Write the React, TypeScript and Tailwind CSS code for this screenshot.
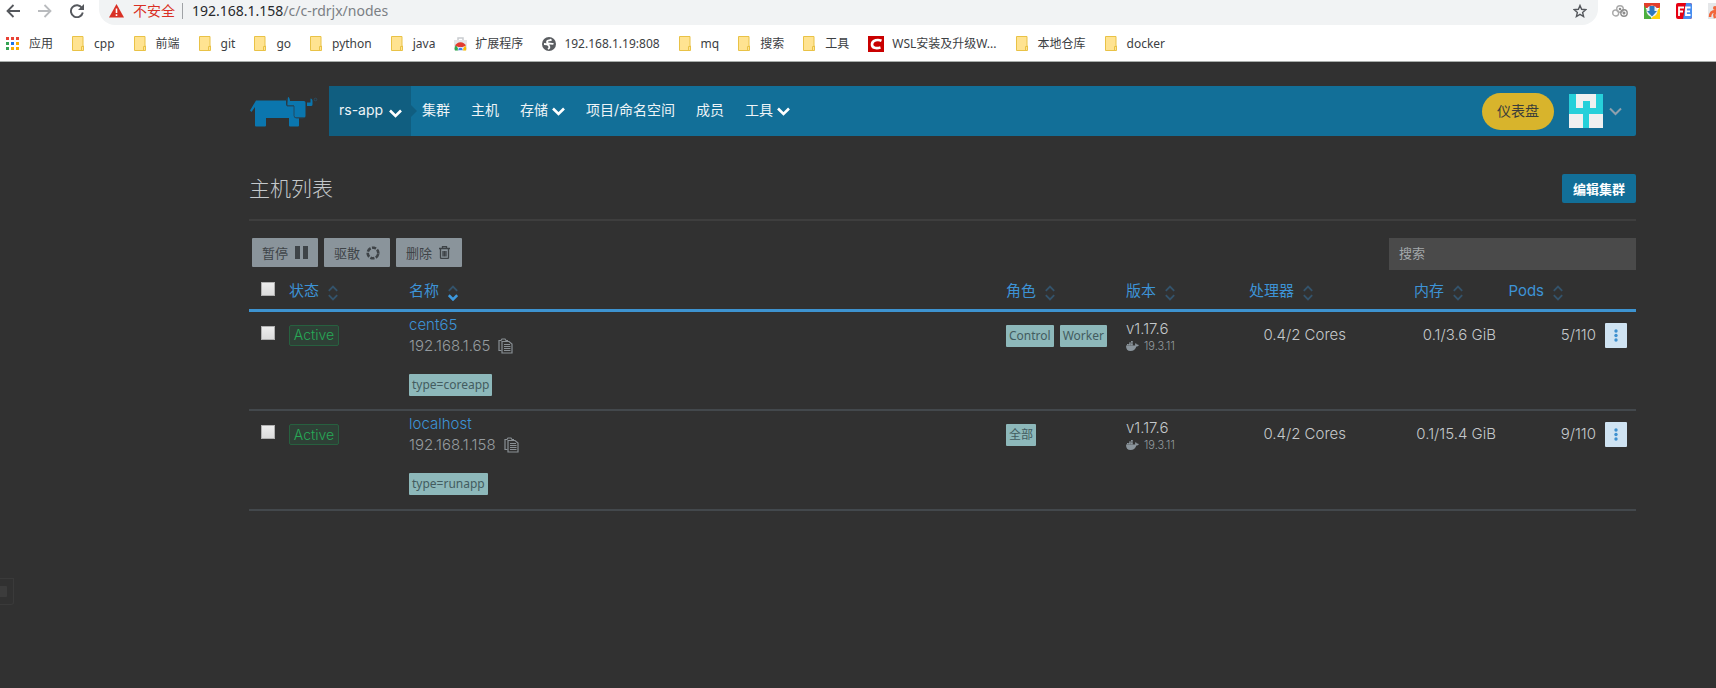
import type { ReactNode } from "react";

const bookmarks: { label: string; icon: "apps" | "folder" | "store" | "globe" | "csdn" }[] = [
  { label: "应用", icon: "apps" },
  { label: "cpp", icon: "folder" },
  { label: "前端", icon: "folder" },
  { label: "git", icon: "folder" },
  { label: "go", icon: "folder" },
  { label: "python", icon: "folder" },
  { label: "java", icon: "folder" },
  { label: "扩展程序", icon: "store" },
  { label: "192.168.1.19:808", icon: "globe" },
  { label: "mq", icon: "folder" },
  { label: "搜索", icon: "folder" },
  { label: "工具", icon: "folder" },
  { label: "WSL安装及升级W...", icon: "csdn" },
  { label: "本地仓库", icon: "folder" },
  { label: "docker", icon: "folder" },
];

const nodes = [
  { name: "cent65", ip: "192.168.1.65", tag: "type=coreapp", roles: ["Control", "Worker"], version: "v1.17.6", docker: "19.3.11", cpu: "0.4/2 Cores", memory: "0.1/3.6 GiB", pods: "5/110" },
  { name: "localhost", ip: "192.168.1.158", tag: "type=runapp", roles: ["全部"], version: "v1.17.6", docker: "19.3.11", cpu: "0.4/2 Cores", memory: "0.1/15.4 GiB", pods: "9/110" },
];

function FolderIcon() {
  return (
    <svg width="12" height="15" viewBox="0 0 12 15">
      <path d="M.5.5h10.5v9.500h.5v4.500H.5z" fill="#ffe391" stroke="#e9c246" />
      <path d="M9.500 14v-3.500h2" fill="none" stroke="#e9c246" />
    </svg>
  );
}

function AppsIcon() {
  const colors = ["#e94235", "#e94235", "#e94235", "#34a353", "#1a73e8", "#f9ab00", "#34a353", "#f9ab00", "#f9ab00"];
  return (
    <svg width="13" height="13" viewBox="0 0 13 13">
      {colors.map((c, i) => (
        <rect key={i} x={(i % 3) * 5} y={Math.floor(i / 3) * 5} width="3" height="3" fill={c} />
      ))}
    </svg>
  );
}

function StoreIcon() {
  return (
    <svg width="13" height="14" viewBox="0 0 13 14">
      <path d="M4 4V1h5v3" fill="none" stroke="#c9ccd0" strokeWidth="1.500" />
      <path d="M0 3h13v9a1.500 1.500 0 0 1-1.500 1.500h-10A1.500 1.500 0 0 1 0 12z" fill="#e4e6e8" />
      <path d="M1 13.500A5.500 5.500 0 0 1 2 8l3 5.500z" fill="#2da94f" />
      <path d="M1.200 8.800a5.700 5.700 0 0 1 10.600 0L8.500 10h-4z" fill="#e33b2e" />
      <path d="M11.300 8.500a6 6 0 0 1 .7 5H8z" fill="#fdbd00" />
      <path d="M4.200 13.500a2.400 2.400 0 1 1 4.600 0z" fill="#3e82f1" stroke="#fff" strokeWidth=".6" />
    </svg>
  );
}

function GlobeIcon() {
  return (
    <svg width="14" height="14" viewBox="0 0 14 14">
      <circle cx="7" cy="7" r="7" fill="#5a5d61" />
      <path d="M9.500 2.500C8 4 5 2.500 5 5s4 1 6.500 2M2 7c2 0 4.500.5 5 2s1.500 1.500-1 3" fill="none" stroke="#fff" strokeWidth="1.800" />
    </svg>
  );
}

function CsdnIcon() {
  return (
    <svg width="16" height="16" viewBox="0 0 16 16">
      <rect width="16" height="16" fill="#c90000" />
      <path d="M13.500 4.800C10 3.300 4.500 4 4 8c-.4 4.200 4.500 4.700 8.500 3.500" fill="none" stroke="#fff" strokeWidth="2.600" />
    </svg>
  );
}

const bookmarkIcons = { apps: <AppsIcon />, folder: <FolderIcon />, store: <StoreIcon />, globe: <GlobeIcon />, csdn: <CsdnIcon /> };

function BrowserChrome() {
  return (
    <header className="overflow-hidden border-b border-[#a9aeab] bg-white font-['Noto_Sans','Noto_Sans_CJK_SC',sans-serif]">
      <div className="flex h-[25px] items-start">
        <div className="flex h-[22px] shrink-0 items-center gap-[18px] pr-[15px] pl-[6px]">
          <button aria-label="后退">
            <svg width="14" height="14" viewBox="0 0 14 14" fill="none" stroke="#55585d" strokeWidth="1.800"><path d="M14 7H1.500M7.500 1 1.500 7l6 6" /></svg>
          </button>
          <button aria-label="前进">
            <svg width="14" height="14" viewBox="0 0 14 14" fill="none" stroke="#b9bbbe" strokeWidth="1.800"><path d="M0 7h12.500M6.500 1l6 6-6 6" /></svg>
          </button>
          <button aria-label="重新加载">
            <svg width="14" height="14" viewBox="0 0 14 14"><path d="M12 4A6 6 0 1 0 12.800 8.500" fill="none" stroke="#55585d" strokeWidth="1.900" /><path d="M14 0v6H8z" fill="#55585d" /></svg>
          </button>
        </div>
        <div className="flex h-[25px] min-w-0 flex-1 items-start rounded-b-[16px] bg-[#f1f3f4] pr-[11px] pl-[10px]">
          <div className="flex h-[22px] flex-1 items-center text-[14px] leading-[20px] whitespace-nowrap">
            <svg width="15" height="14" viewBox="0 0 15 14"><path d="M7.500 0 15 13.500H0z" fill="#d93025" /><path d="M7.500 4.500v4.500M7.500 10.200v1.800" stroke="#fff" strokeWidth="1.600" /></svg>
            <span className="ml-[9px] text-[#d93025]">不安全</span>
            <span className="mr-[9px] ml-[7px] h-[16px] w-px bg-[#a0a3a6]" />
            <span className="text-[#27292c]">192.168.1.158</span>
            <span className="text-[#7b7f84]">/c/c-rdrjx/nodes</span>
          </div>
          <button aria-label="收藏" className="flex h-[22px] items-center">
            <svg width="14" height="14" viewBox="0 0 14 14"><path d="m7 1.500 1.600 3.800 4.200.400-3.200 2.700 1 4.100L7 10.300l-3.600 2.200 1-4.100L1.200 5.700l4.200-.4z" fill="none" stroke="#55585d" strokeWidth="1.400" /></svg>
          </button>
        </div>
        <div className="flex h-[22px] w-[118px] shrink-0 items-center gap-[16px] overflow-hidden pl-[14px]">
          <svg className="shrink-0" width="16" height="16" viewBox="0 0 16 16" fill="none" stroke="#8d8d8d" strokeWidth="1.400">
            <circle cx="8" cy="6" r="3.300" stroke="#aaa" /><circle cx="3.700" cy="10" r="3" stroke="#aaa" /><circle cx="12" cy="10" r="3.200" /><circle cx="12" cy="10" r=".8" /><circle cx="8" cy="6" r=".6" />
          </svg>
          <svg className="shrink-0" width="16" height="16" viewBox="0 0 16 16">
            <rect width="16" height="16" fill="#fff" /><path d="M0 0h16v5H0z" fill="#e33e2b" /><path d="M0 2v14h8z" fill="#4caf3f" /><path d="M16 4v12H7z" fill="#fdd20a" /><circle cx="8" cy="8" r="5.500" fill="#e8eef5" /><path d="M5.500 3h5v5h2.500L8 13.500 3 8h2.500z" fill="#2d77bd" />
          </svg>
          <svg className="shrink-0" width="16" height="16" viewBox="0 0 16 16">
            <rect width="16" height="16" rx="2" fill="#e60012" /><path d="M10 0h4a2 2 0 0 1 2 2v12a2 2 0 0 1-2 2H7z" fill="#488ef0" /><path d="M3 13V4.500h5M3 8.500h4M14.500 4.500H10v7.500h4.500M10 8.300h4" fill="none" stroke="#fff" strokeWidth="1.800" />
          </svg>
          <svg className="shrink-0" width="16" height="16" viewBox="0 0 16 16"><rect width="16" height="16" fill="#e5e7e9" /><circle cx="7" cy="5" r="2" fill="#f2673c" /><path d="M2 14c0-4 2-6 6-6v2c-2 0-2 2-1 5" fill="none" stroke="#f2673c" strokeWidth="2.500" /></svg>
        </div>
      </div>
      <nav className="flex h-[36px] items-center gap-[19px] pt-[1px] pl-[6px] text-[12px] leading-[16px] whitespace-nowrap text-[#3c4043]">
        {bookmarks.map((b) => (
          <a key={b.label} href="#" className={b.icon === "folder" || b.icon === "apps" ? "flex items-center gap-[10px]" : "flex items-center gap-[8px]"}>
            {bookmarkIcons[b.icon]}
            <span>{b.label}</span>
          </a>
        ))}
      </nav>
    </header>
  );
}

function Chevron({ color = "#ffffff", thin = false }: { color?: string; thin?: boolean }) {
  return (
    <svg width="13" height="9" viewBox="0 0 13 9" fill="none" stroke={color} strokeWidth={thin ? 2 : 2.6}>
      <path d="m1 1.500 5.500 5.500L12 1.500" />
    </svg>
  );
}

function SortIcon({ active = false }: { active?: boolean }) {
  return (
    <svg width="10" height="16" viewBox="0 0 10 16" fill="none" stroke="#34536b" strokeWidth="1.800">
      <path d="m.8 5.800 4.200-4.200 4.200 4.200" />
      <path d="m.8 10.200 4.200 4.200 4.200-4.200" stroke={active ? "#3d98dc" : "#34536b"} strokeWidth={active ? 2.6 : 1.8} />
    </svg>
  );
}

function RancherLogo() {
  return (
    <svg width="68" height="31" viewBox="0 0 68 31">
      <path d="M6 3.500h30v3.500q0 2 2 2h6v9q0 3 3 3h2v7.500q0 1-1 1H40q-1 0-1-1V21H16v7.500q0 1-1 1H6q-1 0-1-1V10l-3.500 5L0 13.500z" fill="#0b76ae" />
      <path d="M38 0q1.500 0 2 4h14q1.500 0 1.500 1.500V19q0 1.500-1.500 1.500H45.500Q44 20.500 44 19V8.500h-6q-1 0-1-1.500z" fill="#0b76ae" />
      <path d="M57 5.500h3.500V1.500q2 0 2 3v3q0 1.500-1.500 1.500h-4z" fill="#0b76ae" />
      <path d="M37 1.500V9h7v9.500q0 2.500 2.500 2.500h7" fill="none" stroke="#25465a" strokeWidth=".9" />
      <circle cx="65.500" cy="2.500" r="1.300" fill="none" stroke="#285b78" strokeWidth=".6" />
    </svg>
  );
}

function NavBar() {
  return (
    <div className="flex h-[50px] items-stretch">
      <a href="#" aria-label="Rancher" className="flex w-[80px] shrink-0 items-start pt-[11px] pl-[1px]"><RancherLogo /></a>
      <nav className="flex flex-1 items-center rounded-[2px] bg-[#126f98] pr-[14px] text-[14px] leading-[20px] text-[#eef4f7]">
        <button className="flex h-full w-[82px] items-center justify-between bg-[#105e80] pr-[9px] pb-[2px] pl-[10px]">
          rs-app
          <span className="pt-[6px]"><Chevron /></span>
        </button>
        <svg width="6" height="12" viewBox="0 0 6 12"><path d="M0 0l6 6-6 6z" fill="#105e80" /></svg>
        <div className="flex flex-1 items-center gap-[21px] pb-[2px] pl-[5px] whitespace-nowrap">
          <a href="#">集群</a>
          <a href="#">主机</a>
          <button className="flex items-center gap-[4px]">存储<span className="pt-[2px]"><Chevron /></span></button>
          <a href="#">项目/命名空间</a>
          <a href="#">成员</a>
          <button className="flex items-center gap-[4px]">工具<span className="pt-[2px]"><Chevron /></span></button>
        </div>
        <button className="mr-[15px] h-[37px] rounded-full bg-[#d8b42c] px-[15px] text-[#3b3d3a]">仪表盘</button>
        <button aria-label="用户" className="flex items-center gap-[6px]">
          <svg width="34" height="34" viewBox="0 0 34 34">
            <rect width="34" height="34" fill="#27d0da" />
            <path d="M7 0h20v14h-6V7h-7v7H7zM0 20h14v14H0zM20 20h14v14H20z" fill="#f0f0f0" />
          </svg>
          <Chevron color="#8fa0ad" thin />
        </button>
      </nav>
    </div>
  );
}

function ActionButton({ children, icon }: { children: ReactNode; icon: ReactNode }) {
  return (
    <button className="flex h-[29px] w-[66px] items-center justify-between rounded-[1px] bg-[#8a949b] px-[10px] text-[13px] leading-[20px] text-[#3e4347]">
      {children}
      {icon}
    </button>
  );
}

function Check({ label }: { label: string }) {
  return <input type="checkbox" aria-label={label} className="block size-[14px] appearance-none border border-[#b0b0b0] bg-linear-to-b from-[#ededed] to-[#dcdcdc]" />;
}

function SortHeader({ label, active = false, right = false }: { label: string; active?: boolean; right?: boolean }) {
  return (
    <th className={right ? "pt-[4px] pr-[38px] font-normal" : "pt-[4px] pl-[5px] font-normal"}>
      <button className={right ? "ml-auto flex items-center gap-[9px] whitespace-nowrap" : "flex items-center gap-[9px] whitespace-nowrap"}>
        {label}
        <span className="pt-[3px]"><SortIcon active={active} /></span>
      </button>
    </th>
  );
}

function Badge({ children }: { children: ReactNode }) {
  return <span className="flex h-[22px] items-center rounded-[1px] bg-[#8db8ba] px-[3px] font-['Noto_Sans','Noto_Sans_CJK_SC',sans-serif] text-[12px] leading-[16px] font-normal text-[#435c60]">{children}</span>;
}

function NodeTable() {
  return (
    <table className="w-full table-fixed border-collapse text-left text-[15px] leading-[20px] font-light">
      <colgroup>
        <col className="w-[35px]" />
        <col className="w-[120px]" />
        <col />
        <col className="w-[120px]" />
        <col className="w-[120px]" />
        <col className="w-[110px]" />
        <col className="w-[150px]" />
        <col className="w-[100px]" />
        <col className="w-[35px]" />
      </colgroup>
      <thead className="text-[#3d93d6]">
        <tr className="h-[40px] border-b-3 border-[#3d93d0]">
          <th className="pb-[1px] pl-[12px]"><Check label="全选" /></th>
          <SortHeader label="状态" />
          <SortHeader label="名称" active />
          <SortHeader label="角色" />
          <SortHeader label="版本" />
          <SortHeader label="处理器" right />
          <SortHeader label="内存" right />
          <SortHeader label="Pods" right />
          <th />
        </tr>
      </thead>
      <tbody className="text-[#c4c8cb]">
        {nodes.map((n) => (
          <tr key={n.name} className="h-[100px] border-b-2 border-[#43484c] align-top">
            <td className="pt-[14px] pl-[12px]"><Check label={n.name} /></td>
            <td className="pt-[13px] pl-[5px]">
              <span className="inline-flex h-[21px] w-[50px] items-center justify-center rounded-[2px] border border-[#27603f] bg-[#2e4036] text-[14px] leading-[16px] text-[#27aa56]">Active</span>
            </td>
            <td className="pt-[3px] pl-[5px]">
              <a href="#" className="block text-[#3d93d6]">{n.name}</a>
              <div className="flex items-center gap-[8px] pt-[1px] text-[#959b9f]">
                {n.ip}
                <button aria-label="复制">
                  <svg width="15" height="16" viewBox="0 0 15 16" fill="none" stroke="#898f94" strokeWidth="1.200">
                    <path d="M3.500 12.500h-2.500v-10h2l1-1.500h3l1 1.500h2" /><path d="M4 3.500h7l3 2.500v9H4z" /><path d="M6 6.500h6M6 8.500h6.500M6 10.500h6.500M6 12.500h6.500" />
                  </svg>
                </button>
              </div>
              <div className="mt-[18px] flex"><Badge>{n.tag}</Badge></div>
            </td>
            <td className="pt-[13px] pl-[5px]"><div className="flex gap-[6px]">{n.roles.map((r) => <Badge key={r}>{r}</Badge>)}</div></td>
            <td className="pt-[7px] pl-[5px]">
              <div>{n.version}</div>
              <div className="flex items-center gap-[5px] text-[11px] leading-[14px] text-[#959b9f]">
                <svg width="13" height="10" viewBox="0 0 13 10"><path d="M0 4.500h9.300q-.6-1.300.3-2.500 1 .6 1.200 1.600 1.200-.2 2.200.4-.8 1.500-2.600 1.500Q8.800 10 4.500 10 0 10 0 4.500zM1 3h1.800v1.200H1zM3 3h1.800v1.200H3zM5 3h1.800v1.200H5zM3 1.500h3.800v1.200H3zM5 0h1.800v1.200H5z" fill="#8a949b" /></svg>
                {n.docker}
              </div>
            </td>
            <td className="pt-[13px] pr-[5px] text-right whitespace-nowrap">{n.cpu}</td>
            <td className="pt-[13px] pr-[5px] text-right whitespace-nowrap">{n.memory}</td>
            <td className="pt-[13px] pr-[5px] text-right whitespace-nowrap">{n.pods}</td>
            <td className="pt-[11px] pl-[4px]">
              <button aria-label="操作" className="flex h-[25px] w-[22px] items-center justify-center rounded-[1px] bg-[#cfe3f2]">
                <svg width="4" height="13" viewBox="0 0 4 13" fill="#3d90cf"><circle cx="2" cy="2" r="1.700" /><circle cx="2" cy="6.500" r="1.700" /><circle cx="2" cy="11" r="1.700" /></svg>
              </button>
            </td>
          </tr>
        ))}
      </tbody>
    </table>
  );
}

export default function App() {
  return (
    <div className="relative min-h-screen bg-[#313131] font-['Inter','Noto_Sans_CJK_SC',sans-serif]">
      <BrowserChrome />
      <main className="pt-[24px] pr-[80px] pl-[249px]">
        <NavBar />
        <div className="mt-[38px] flex h-[29px] items-center justify-between">
          <h1 className="text-[21px] leading-[28px] font-light text-[#c4c8cb]">主机列表</h1>
          <button className="h-[29px] w-[74px] rounded-[2px] bg-[#126f98] text-[13px] leading-[20px] font-bold text-white">编辑集群</button>
        </div>
        <hr className="mt-[16px] border-t-2 border-[#3e3e3e]" />
        <div className="mt-[17px] flex h-[32px] items-start justify-between pl-[3px]">
          <div className="flex gap-[6px]">
            <ActionButton icon={<svg width="13" height="13" viewBox="0 0 13 13" fill="#3e4347"><path d="M0 0h5v13H0zM8 0h5v13H8z" /></svg>}>暂停</ActionButton>
            <ActionButton icon={<svg width="14" height="14" viewBox="0 0 14 14" fill="none" stroke="#3e4347" strokeWidth="2.600"><circle cx="7" cy="7" r="5.300" strokeDasharray="4.200 1.350" transform="rotate(12 7 7)" /></svg>}>驱散</ActionButton>
            <ActionButton icon={<svg className="mr-[2px]" width="11" height="13" viewBox="0 0 11 13" fill="none" stroke="#3e4347" strokeWidth="1.300"><path d="M0 2.500h11M3.500 2V.7h4V2M1.500 3v8.700q0 .6.600.6h6.800q.6 0 .6-.6V3M4 5v5.500M5.500 5v5.500M7 5v5.500" /></svg>}>删除</ActionButton>
          </div>
          <input type="text" aria-label="搜索" placeholder="搜索" className="h-[32px] w-[247px] bg-[#4a4a4a] px-[10px] pb-[2px] text-[13px] text-[#c4c8cb] placeholder:text-[#a3a8ab]" />
        </div>
        <NodeTable />
      </main>
      <div className="absolute top-[578px] left-0 flex h-[27px] w-[14px] items-center rounded-br-[3px] border border-l-0 border-[#3a3a3a]">
        <span className="h-[11px] w-[7px] rounded-r-[1px] bg-[#3c3c3c]" />
      </div>
    </div>
  );
}
